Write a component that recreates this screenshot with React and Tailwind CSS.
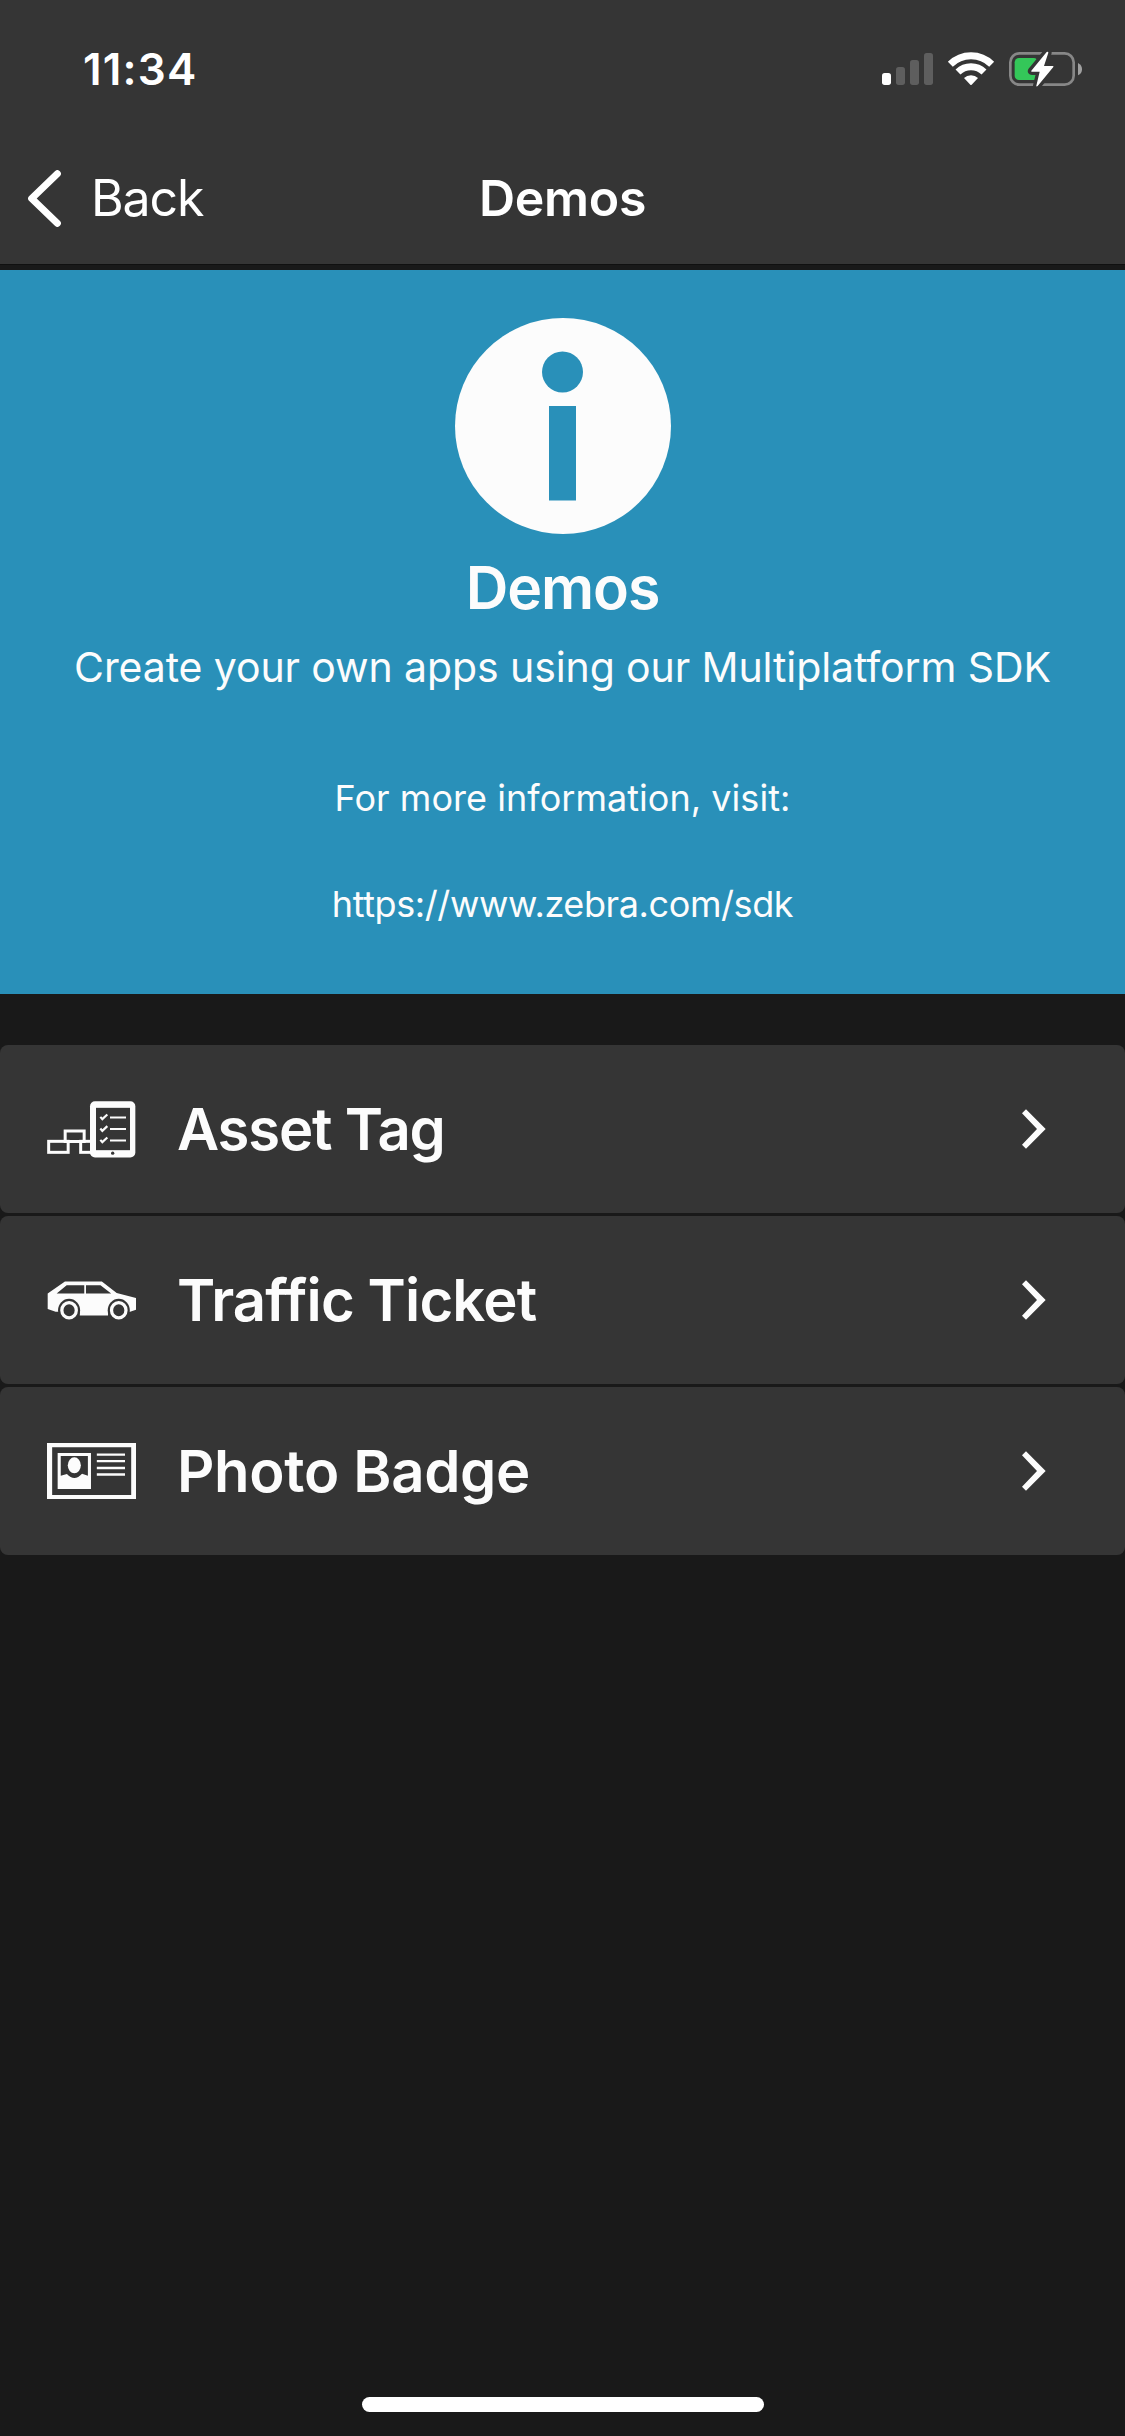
import { useState } from "react";

function StatusIcons() {
  return (
    <svg className="w-[200px] h-[36px]" viewBox="66 63 600 108" fill="none">
      <rect x="66" y="129" width="27" height="36" rx="8" fill="#fff" />
      <rect x="108" y="111" width="27" height="54" rx="8" fill="#5e5e5e" />
      <rect x="150" y="90" width="27" height="75" rx="8" fill="#5e5e5e" />
      <rect x="192" y="69" width="27" height="96" rx="8" fill="#5e5e5e" />

      <path d="M271 103a88 88 0 0 1 124 0" stroke="#fff" strokeWidth="21" />
      <path d="M294 126a55.500 55.500 0 0 1 78 0" stroke="#fff" strokeWidth="21" />
      <path d="M312 144a30 30 0 0 1 42 0L335 164q-2 2-4 0z" fill="#fff" />

      <rect x="451" y="70" width="190" height="94" rx="27" stroke="#878787" strokeWidth="8" />
      <path d="M654 99q12 6 12 18.500t-12 18.500z" fill="#a0a0a0" />
      <rect x="464" y="84" width="70" height="66" rx="13" fill="#34c759" />
      <path
        d="M560 66L514 122q-2 3 2 3h23l-10 42q0 4 4 1L580 111q2-3-2-3h-26L565 68q0-5-5-2z"
        fill="#fff"
        stroke="#353535"
        strokeWidth="20"
        strokeLinejoin="round"
        paintOrder="stroke"
      />
    </svg>
  );
}

function BackArrow() {
  return (
    <svg className="w-[33px] h-[57px]" viewBox="84 417 99 171" fill="none">
      <path
        d="M172 428L95 502.500L172 577"
        stroke="#fff"
        strokeWidth="21"
        strokeLinecap="round"
        strokeLinejoin="round"
      />
    </svg>
  );
}

function Chevron() {
  return (
    <svg className="w-[24px] h-[40px]" viewBox="186 237 72 120">
      <path d="M186 250L198 238L257 297L198 356L186 344L231 297z" fill="#fcfcfc" />
    </svg>
  );
}

function InfoIcon() {
  return (
    <svg className="w-[216px] h-[216px] shrink-0" viewBox="0 0 216 216">
      <circle cx="108" cy="108" r="108" fill="#fcfcfc" />
      <circle cx="107.500" cy="54" r="20.500" fill="#2990b9" />
      <rect x="94" y="88" width="27" height="94.500" fill="#2990b9" />
    </svg>
  );
}

function AssetIcon() {
  return (
    <svg className="w-[89px] h-[57px]" viewBox="51 211.500 267 171" fill="none">
      <g stroke="#fcfcfc" strokeWidth="9">
        <rect x="56" y="332.500" width="58.500" height="33" />
        <rect x="105.500" y="301.500" width="57" height="31.500" />
        <rect x="152" y="332.500" width="38" height="33" />
      </g>
      <rect x="180" y="212" width="136" height="169" rx="15" fill="#fcfcfc" />
      <rect x="198" y="232" width="102" height="127" fill="#353535" />
      <circle cx="248" cy="368" r="5" fill="#353535" />
      <g stroke="#fcfcfc" strokeWidth="6.500">
        <path d="M211 259l6 7l15-14M240 261h48" />
        <path d="M211 294l6 7l15-14M240 295.500h48" />
        <path d="M211 328l6 7l15-14M240 330h48" />
      </g>
    </svg>
  );
}

function CarIcon() {
  return (
    <svg className="w-[89px] h-[39px]" viewBox="50 211.500 258 116" preserveAspectRatio="none">
      <path
        d="M52 249L102 213H209L252 247L308 262V297L291 303H227V314H145V303H75L52 295z"
        fill="#fcfcfc"
      />
      <path d="M78 249L107 224H158V249zM163 224H205L236 249H163z" fill="#353535" />
      <g fill="#353535">
        <ellipse cx="114" cy="298.500" rx="32" ry="34" />
        <ellipse cx="258" cy="298.500" rx="32" ry="34" />
      </g>
      <g fill="none" stroke="#fcfcfc" strokeWidth="9.500">
        <ellipse cx="114" cy="298.500" rx="21" ry="22.500" />
        <ellipse cx="258" cy="298.500" rx="21" ry="22.500" />
      </g>
    </svg>
  );
}

function BadgeIcon() {
  return (
    <svg className="w-[89px] h-[56px]" viewBox="49 189 259 168" preserveAspectRatio="none">
      <path d="M49 189H308V357H49zM64 202V345H294V202z" fill="#fcfcfc" fillRule="evenodd" />
      <path d="M80 219H177V327H80zM89 228V287L107 282Q129 306 151 281L168 287V228z" fill="#fcfcfc" fillRule="evenodd" />
      <ellipse cx="128.500" cy="256" rx="19" ry="24" fill="#fcfcfc" />
      <path d="M194 224H276M194 243.500H276M194 264H276M194 283.500H276" stroke="#fcfcfc" strokeWidth="7" />
    </svg>
  );
}

const demos = [
  { name: "Asset Tag", icon: AssetIcon, spacing: "tracking-[-1.2px]" },
  { name: "Traffic Ticket", icon: CarIcon, spacing: "tracking-[-0.85px]" },
  { name: "Photo Badge", icon: BadgeIcon, spacing: "tracking-[-0.3px]" },
];

function App() {
  const [selected, setSelected] = useState(null);

  return (
    <div className="flex flex-col w-[1125px] h-[2436px] bg-[#191919] text-[#fcfcfc] font-['Inter',sans-serif]">
      <header className="h-[265px] shrink-0 bg-[#353535] border-b border-[#101010] text-white">
        <div className="h-[132px] pt-[6px] pl-[83px] pr-[43px] flex items-center justify-between">
          <span className="text-[44px] font-semibold tracking-[1.2px]">11:34</span>
          <StatusIcons />
        </div>
        <nav className="h-[132px] px-[28px] grid grid-cols-3 items-center">
          <button className="flex items-center gap-[30px] text-[50px]">
            <BackArrow />
            <span className="tracking-[-1.1px]">Back</span>
          </button>
          <h1 className="text-center text-[50px] font-semibold tracking-[-0.3px]">Demos</h1>
        </nav>
      </header>

      <section className="mt-[5px] h-[724px] shrink-0 pt-[48px] bg-[#2990b9] flex flex-col items-center whitespace-nowrap">
        <InfoIcon />
        <h2 className="mt-[18px] text-[59px] leading-[71px] font-semibold tracking-[-1.1px]">
          Demos
        </h2>
        <p className="mt-[14px] text-[41px] leading-[60px] tracking-[-0.1px]">
          Create your own apps using our Multiplatform SDK
        </p>
        <p className="mt-[76px] text-[36px] leading-[50px] tracking-[0.04px]">
          For more information, visit:
        </p>
        <p className="mt-[56px] text-[36px] leading-[50px] tracking-[-0.4px]">
          https://www.zebra.com/sdk
        </p>
      </section>

      <main className="mt-[51px] flex flex-col gap-[3px]">
        {demos.map(({ name, icon: Icon, spacing }) => (
          <button
            key={name}
            onClick={() => setSelected(name)}
            aria-pressed={selected === name}
            className="h-[168px] pl-[47px] pr-[79px] flex items-center rounded-[8px] bg-[#353535] text-left"
          >
            <Icon />
            <span className={`ml-[41px] flex-1 text-[58px] font-semibold ${spacing}`}>{name}</span>
            <Chevron />
          </button>
        ))}
      </main>

      <div className="mt-auto mb-[24px] w-[402px] h-[15px] self-center rounded-full bg-white" />
    </div>
  );
}

export default App;
